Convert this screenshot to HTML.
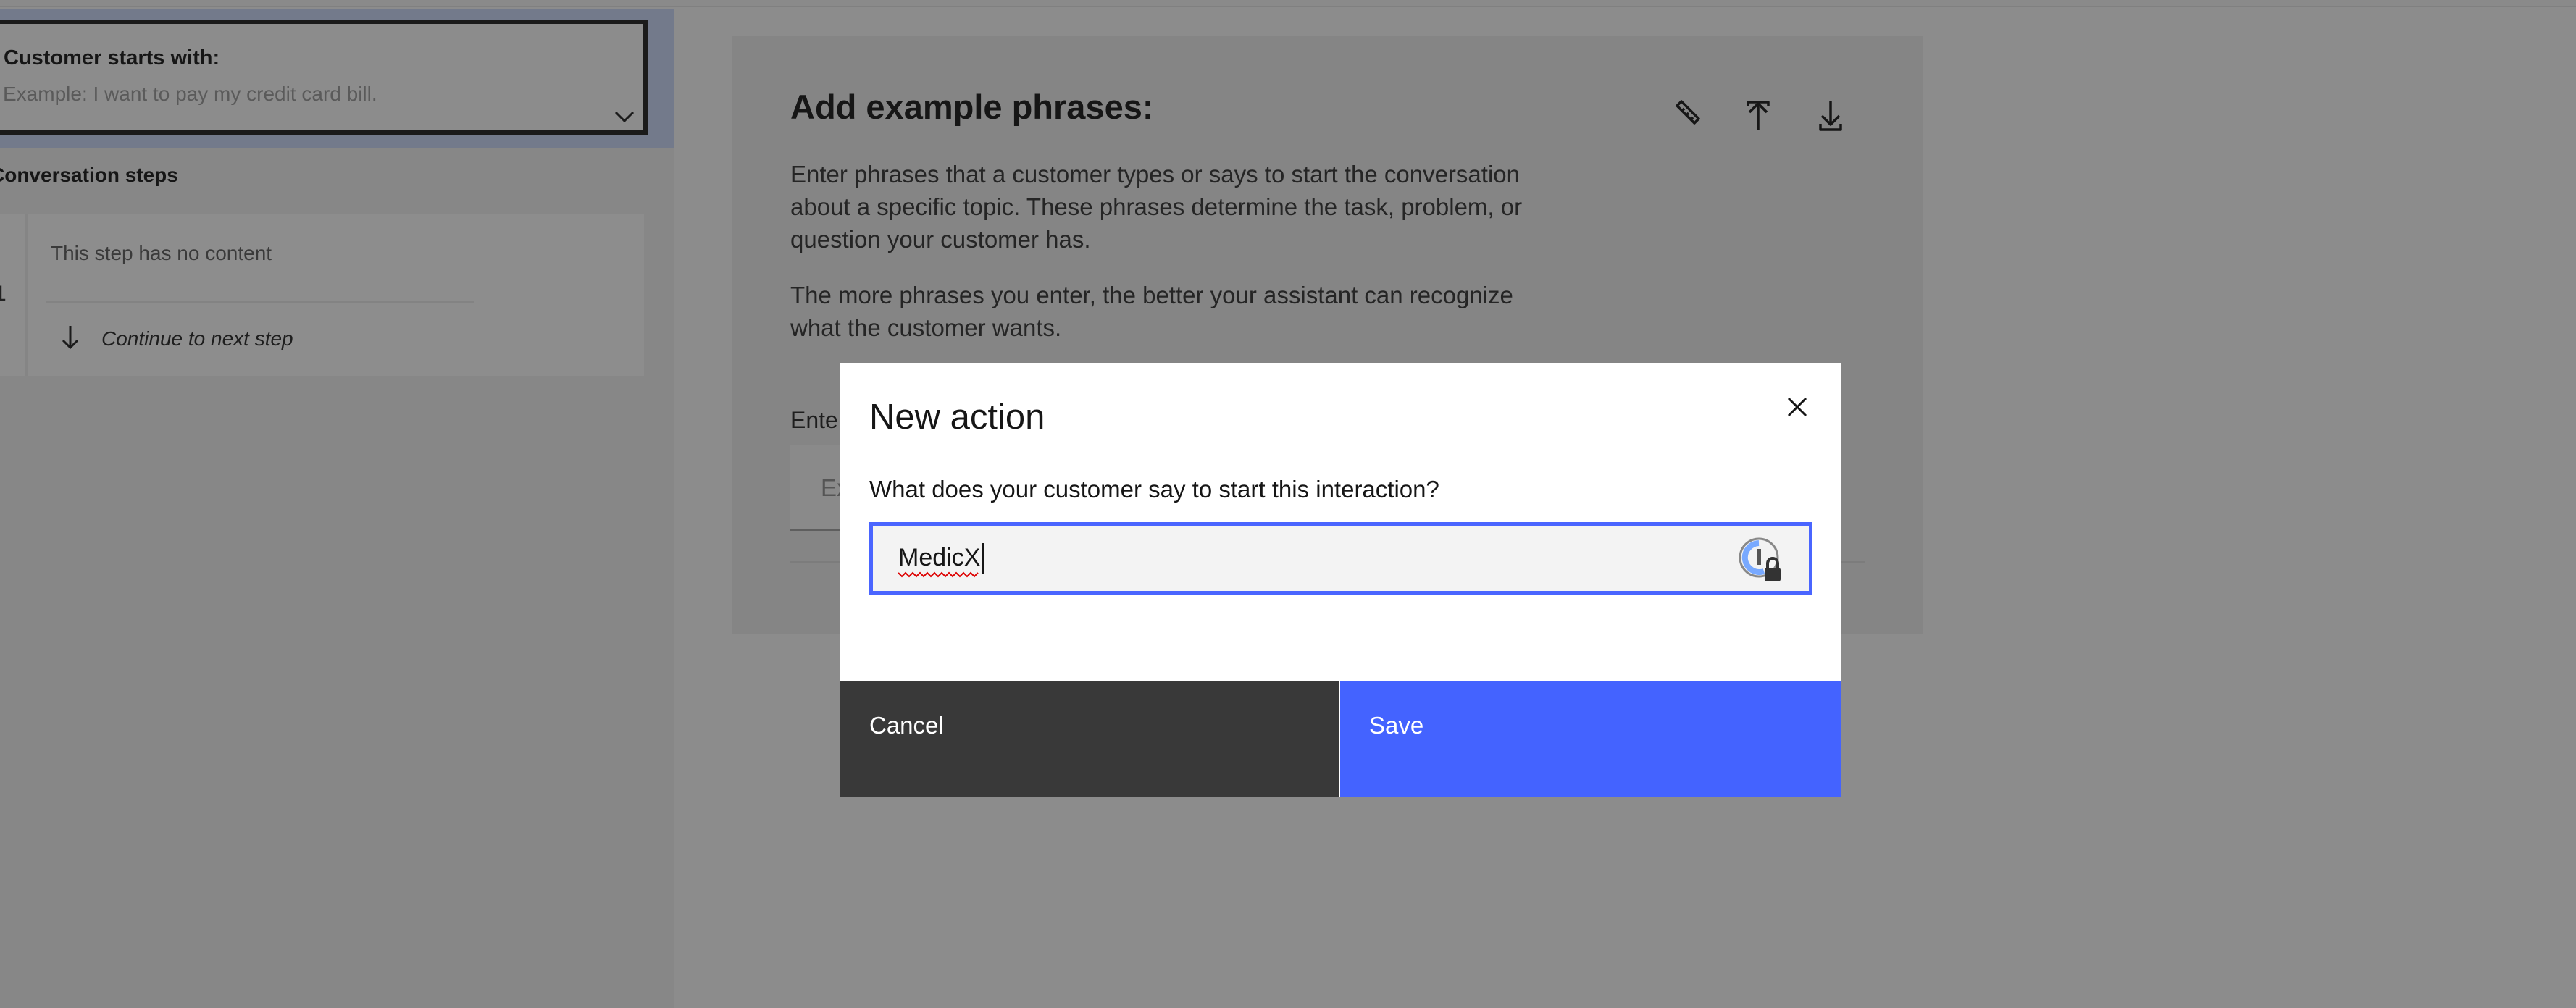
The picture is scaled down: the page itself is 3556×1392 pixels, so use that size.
<!DOCTYPE html>
<html><head><meta charset="utf-8"><style>
*{margin:0;padding:0;box-sizing:border-box}
body{width:3556px;height:1392px;background:#8c8c8c;font-family:"Liberation Sans",sans-serif;position:relative;overflow:hidden;color:#161616}
.a{position:absolute;white-space:nowrap}
</style></head><body>
<div class="a" style="left:0;top:0;width:3556px;height:10px;background:#8a8a8a;border-bottom:2px solid #808080"></div>
<!-- left panel -->
<div class="a" style="left:0;top:12px;width:930px;height:1380px;background:#878787"></div>
<div class="a" style="left:0;top:12px;width:930px;height:192px;background:#737a8b"></div>
<div class="a" style="left:-6px;top:27px;width:900px;height:159px;border:6px solid #1b1b1b;background:#8c8c8c"></div>
<div class="a" style="left:5px;top:64px;font-size:29px;font-weight:bold">Customer starts with:</div>
<div class="a" style="left:4px;top:114px;font-size:28px;color:#5a5a5a">Example: I want to pay my credit card bill.</div>
<svg class="a" style="left:848px;top:152px" width="28" height="18"><path d="M2 3 L14 15 L26 3" fill="none" stroke="#1b1b1b" stroke-width="3"/></svg>
<div class="a" style="left:-14px;top:226px;font-size:28px;font-weight:bold">Conversation steps</div>
<div class="a" style="left:0;top:295px;width:889px;height:224px;background:#8d8d8d"></div>
<div class="a" style="left:35px;top:295px;width:4px;height:224px;background:#858585"></div>
<div class="a" style="left:-8px;top:389px;font-size:30px;color:#222">1</div>
<div class="a" style="left:70px;top:334px;font-size:28px;color:#3a3a3a">This step has no content</div>
<div class="a" style="left:64px;top:416px;width:590px;height:3px;background:#838383"></div>
<svg class="a" style="left:84px;top:448px" width="26" height="36"><path d="M13 2 V32 M3 22 L13 32 L23 22" fill="none" stroke="#1b1b1b" stroke-width="3"/></svg>
<div class="a" style="left:140px;top:452px;font-size:28px;font-style:italic;color:#1e1e1e">Continue to next step</div>
<!-- main card -->
<div class="a" style="left:1011px;top:50px;width:1643px;height:825px;background:#858585"></div>
<div class="a" style="left:1091px;top:120px;font-size:47px;font-weight:bold;color:#161616">Add example phrases:</div>
<svg class="a" style="left:2300px;top:138px" width="260" height="50">
<g fill="none" stroke="#161616" stroke-width="3.5" stroke-linejoin="round">
<path d="M15 8 L21 2 L45 26 L39 32 Z M22 15 L25 12 M28 21 L31 18 M34 27 L37 24"/>
<path d="M113 8 V3 H141 V8 M127 42 V5 M115 17 L127 5 L139 17"/>
<path d="M227 2 V34 M215 22 L227 34 L239 22 M213 33 V41 H241 V33"/>
</g></svg>
<div class="a" style="left:1091px;top:218px;font-size:33px;line-height:45px;color:#252525">Enter phrases that a customer types or says to start the conversation<br>about a specific topic. These phrases determine the task, problem, or<br>question your customer has.</div>
<div class="a" style="left:1091px;top:385px;font-size:33px;line-height:45px;color:#252525">The more phrases you enter, the better your assistant can recognize<br>what the customer wants.</div>
<div class="a" style="left:1091px;top:562px;font-size:32px;color:#1e1e1e">Enter</div>
<div class="a" style="left:1091px;top:615px;width:1400px;height:118px;background:#8a8a8a;border-bottom:3px solid #5e5e5e"></div>
<div class="a" style="left:1133px;top:655px;font-size:33px;color:#555">Ex</div>
<div class="a" style="left:1091px;top:775px;width:1483px;height:2px;background:#7c7c7c"></div>
<!-- modal -->
<div class="a" style="left:1160px;top:501px;width:1382px;height:599px;background:#fff"></div>
<div class="a" style="left:1200px;top:548px;font-size:49px;color:#161616">New action</div>
<svg class="a" style="left:2466px;top:547px" width="30" height="30"><path d="M3 3 L27 27 M27 3 L3 27" stroke="#161616" stroke-width="3"/></svg>
<div class="a" style="left:1200px;top:657px;font-size:33px;color:#161616">What does your customer say to start this interaction?</div>
<div class="a" style="left:1200px;top:721px;width:1302px;height:100px;background:#f3f3f3;border:5px solid #4a65ff"></div>
<div class="a" style="left:1240px;top:751px;font-size:34px;color:#161616">MedicX</div>
<svg class="a" style="left:1240px;top:788px" width="120" height="10"><path d="M0 3 L5 8 L10 3 L15 8 L20 3 L25 8 L30 3 L35 8 L40 3 L45 8 L50 3 L55 8 L60 3 L65 8 L70 3 L75 8 L80 3 L85 8 L90 3 L95 8 L100 3 L105 8 L110 3" fill="none" stroke="#d00" stroke-width="2"/></svg>
<div class="a" style="left:1356px;top:750px;width:2px;height:42px;background:#161616"></div>
<svg class="a" style="left:2395px;top:740px" width="70" height="70">
<circle cx="33" cy="30" r="26" fill="none" stroke="#888" stroke-width="3"/>
<path d="M33 10 A20 20 0 1 0 40 49" fill="none" stroke="#78a9ff" stroke-width="8"/>
<rect x="31" y="18" width="5" height="22" fill="#555"/>
<rect x="41" y="44" width="22" height="19" rx="3" fill="#333"/>
<path d="M45 45 V38 a7 7 0 0 1 14 0 V45" fill="none" stroke="#333" stroke-width="4"/>
</svg>
<div class="a" style="left:1160px;top:941px;width:688px;height:159px;background:#393939"></div>
<div class="a" style="left:1850px;top:941px;width:692px;height:159px;background:#4463ff"></div>
<div class="a" style="left:1200px;top:983px;font-size:33px;color:#fff">Cancel</div>
<div class="a" style="left:1890px;top:983px;font-size:33px;color:#fff">Save</div>
</body></html>
